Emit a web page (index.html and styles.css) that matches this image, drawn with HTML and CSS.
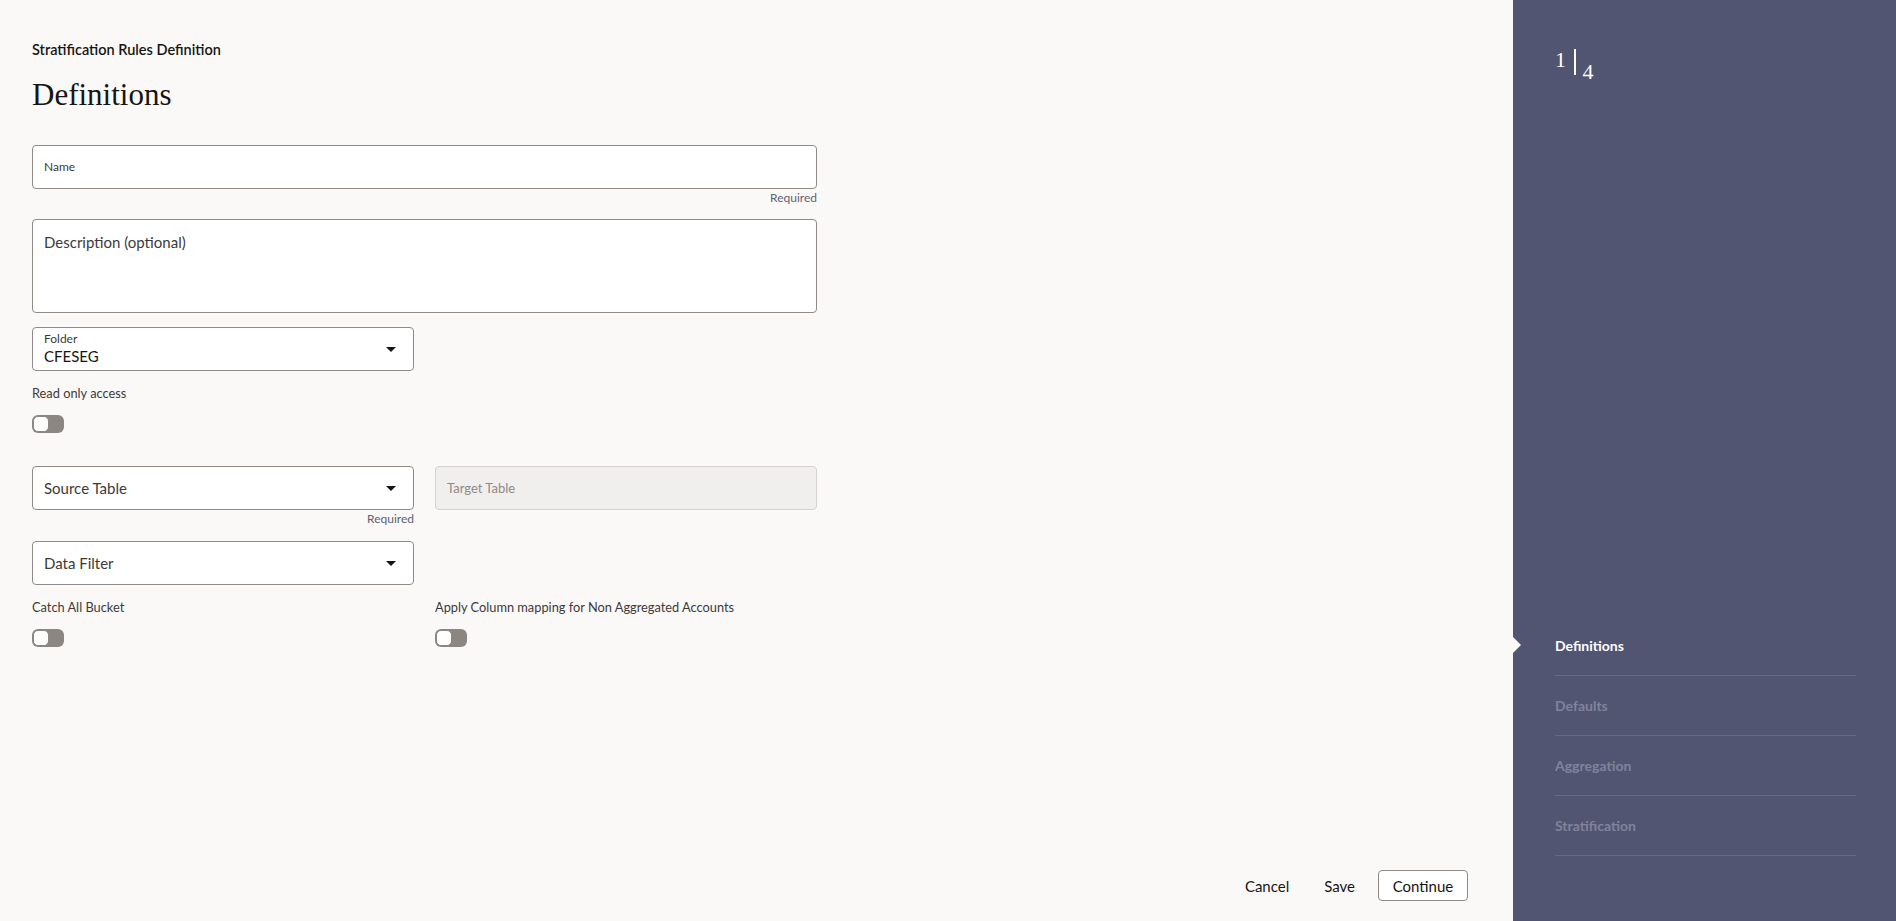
FILE: index.html
```html
<!DOCTYPE html>
<html lang="en">
<head>
<meta charset="utf-8">
<title>Stratification Rules Definition</title>
<link rel="stylesheet" href="styles.css">
</head>
<body>
<div class="page">
  <main class="main">
    <div class="subtitle">Stratification Rules Definition</div>
    <h1 class="heading">Definitions</h1>

    <div class="form">
      <div class="field-wide">
        <div class="input input-center"><span class="label-small">Name</span></div>
        <div class="helper">Required</div>
      </div>

      <div class="field-wide">
        <div class="textarea"><span class="label-large">Description (optional)</span></div>
      </div>

      <div class="grid grid-folder">
        <div class="select select-filled">
          <div class="select-text">
            <span class="label-small">Folder</span>
            <span class="value">CFESEG</span>
          </div>
          <span class="caret"></span>
        </div>
        <div></div>
      </div>

      <div class="switch-block">
        <div class="switch-label">Read only access</div>
        <div class="switch"><span class="knob"></span></div>
      </div>

      <div class="grid grid-tables">
        <div>
          <div class="select">
            <span class="label-large">Source Table</span>
            <span class="caret"></span>
          </div>
          <div class="helper">Required</div>
        </div>
        <div>
          <div class="input input-disabled"><span class="label-disabled">Target Table</span></div>
        </div>
      </div>

      <div class="grid grid-filter">
        <div class="select">
          <span class="label-large">Data Filter</span>
          <span class="caret"></span>
        </div>
        <div></div>
      </div>

      <div class="grid grid-switches">
        <div class="switch-block">
          <div class="switch-label">Catch All Bucket</div>
          <div class="switch"><span class="knob"></span></div>
        </div>
        <div class="switch-block">
          <div class="switch-label">Apply Column mapping for Non Aggregated Accounts</div>
          <div class="switch"><span class="knob"></span></div>
        </div>
      </div>
    </div>

    <div class="footer">
      <button class="btn btn-text btn-cancel">Cancel</button>
      <button class="btn btn-text btn-save">Save</button>
      <button class="btn btn-outline">Continue</button>
    </div>
  </main>

  <aside class="aside">
    <div class="counter">
      <span class="cur">1</span>
      <span class="bar"></span>
      <span class="total">4</span>
    </div>
    <nav class="steps">
      <div class="step step-active">Definitions</div>
      <div class="step">Defaults</div>
      <div class="step">Aggregation</div>
      <div class="step">Stratification</div>
    </nav>
  </aside>
</div>
</body>
</html>
```

FILE: styles.css
```css
* { box-sizing: border-box; }

html, body {
  margin: 0;
  padding: 0;
  height: 100%;
}

body {
  font-family: "Lato", "Liberation Sans", sans-serif;
  color: #161513;
  background: #fbf9f8;
}

.page {
  display: flex;
  height: 921px;
  overflow: hidden;
}

.main {
  flex: 1;
  display: flex;
  flex-direction: column;
  padding: 41px 45px 20px 32px;
  background: #fbf9f8;
}

.subtitle {
  font-size: 14.5px;
  line-height: 18px;
  font-weight: 600;
  color: #161513;
}

.heading {
  margin: 18px 0 0 0;
  font-family: "Liberation Serif", "DejaVu Serif", serif;
  font-weight: 400;
  font-size: 31px;
  line-height: 36px;
  color: #161513;
}

.form {
  width: 785px;
  margin-top: 32px;
  display: flex;
  flex-direction: column;
}

.input,
.select,
.textarea {
  background: #ffffff;
  border: 1px solid #8f8b87;
  border-radius: 4px;
}

.input {
  height: 44px;
  display: flex;
  align-items: center;
  padding: 0 11px;
}

.input-disabled {
  background: #f1efed;
  border-color: #d6d2cf;
}

.textarea {
  height: 94px;
  padding: 12px 11px;
  margin-top: 13px;
}

.label-small {
  font-size: 12px;
  line-height: 14px;
  color: #3d3a37;
}

.label-large {
  font-size: 15px;
  line-height: 20px;
  color: #3d3a37;
}

.label-disabled {
  font-size: 13px;
  line-height: 16px;
  color: #8e8a87;
}

.helper {
  margin-top: 1px;
  text-align: right;
  font-size: 12px;
  line-height: 16px;
  color: #5b6173;
}

.grid {
  display: grid;
  grid-template-columns: 382px 382px;
  column-gap: 21px;
  margin-top: 13px;
}

.grid-folder {
  margin-top: 14px;
}

.select {
  height: 44px;
  display: flex;
  align-items: center;
  justify-content: space-between;
  padding: 0 17px 0 11px;
}

.select-filled {
  align-items: flex-start;
  padding-top: 4px;
}

.select-filled .caret {
  align-self: center;
  margin-top: -4px;
}

.select-text {
  display: flex;
  flex-direction: column;
}

.value {
  margin-top: 1px;
  font-size: 15px;
  line-height: 18px;
  color: #161513;
}

.caret {
  width: 0;
  height: 0;
  border-left: 5px solid transparent;
  border-right: 5px solid transparent;
  border-top: 5px solid #161513;
}

.switch-block {
  display: flex;
  flex-direction: column;
}

.form > .switch-block {
  margin-top: 14px;
}

.switch-label {
  font-size: 12.8px;
  line-height: 16px;
  color: #3d3a37;
}

.switch {
  margin-top: 14px;
  width: 32px;
  height: 18px;
  border-radius: 6px;
  background: #8c8682;
  padding: 1px;
  display: flex;
}

.knob {
  width: 16px;
  height: 16px;
  border-radius: 5px;
  background: #ffffff;
  border: 1px solid #8c8682;
}

.grid-tables {
  margin-top: 33px;
}

.grid-filter {
  margin-top: 14px;
}

.grid-switches {
  margin-top: 14px;
}

.footer {
  margin-top: auto;
  display: flex;
  justify-content: flex-end;
  align-items: center;
}

.btn {
  font-family: "Lato", "Liberation Sans", sans-serif;
  font-size: 15px;
  line-height: 18px;
  color: #161513;
  background: transparent;
  border: 1px solid transparent;
  border-radius: 4px;
  height: 31px;
  padding: 0 12px;
  cursor: pointer;
}

.btn-save {
  margin-left: 9px;
}

.btn-outline {
  margin-left: 10px;
  width: 90px;
  padding: 0;
  background: #ffffff;
  border-color: #8f8b87;
}

.aside {
  width: 383px;
  flex: none;
  background: #515571;
  display: flex;
  flex-direction: column;
  padding: 0 40px 65px 42px;
  color: #ffffff;
}

.counter {
  display: flex;
  align-items: flex-start;
  margin-top: 47px;
  font-family: "Liberation Serif", "DejaVu Serif", serif;
  font-size: 22px;
  line-height: 26px;
  color: #ffffff;
}

.bar {
  width: 1.5px;
  height: 26px;
  background: #ffffff;
  margin: 2px 0 0 8px;
}

.total {
  margin: 12px 0 0 7px;
}

.steps {
  margin-top: auto;
  display: flex;
  flex-direction: column;
}

.step {
  position: relative;
  height: 60px;
  display: flex;
  align-items: center;
  border-bottom: 1px solid #656983;
  font-size: 14px;
  font-weight: 700;
  color: #80839b;
}

.step-active {
  color: #ffffff;
}

.step-active::before {
  content: "";
  position: absolute;
  left: -42px;
  top: 50%;
  margin-top: -8.5px;
  width: 0;
  height: 0;
  border-top: 8.5px solid transparent;
  border-bottom: 8.5px solid transparent;
  border-left: 8px solid #fbf9f8;
}
```
